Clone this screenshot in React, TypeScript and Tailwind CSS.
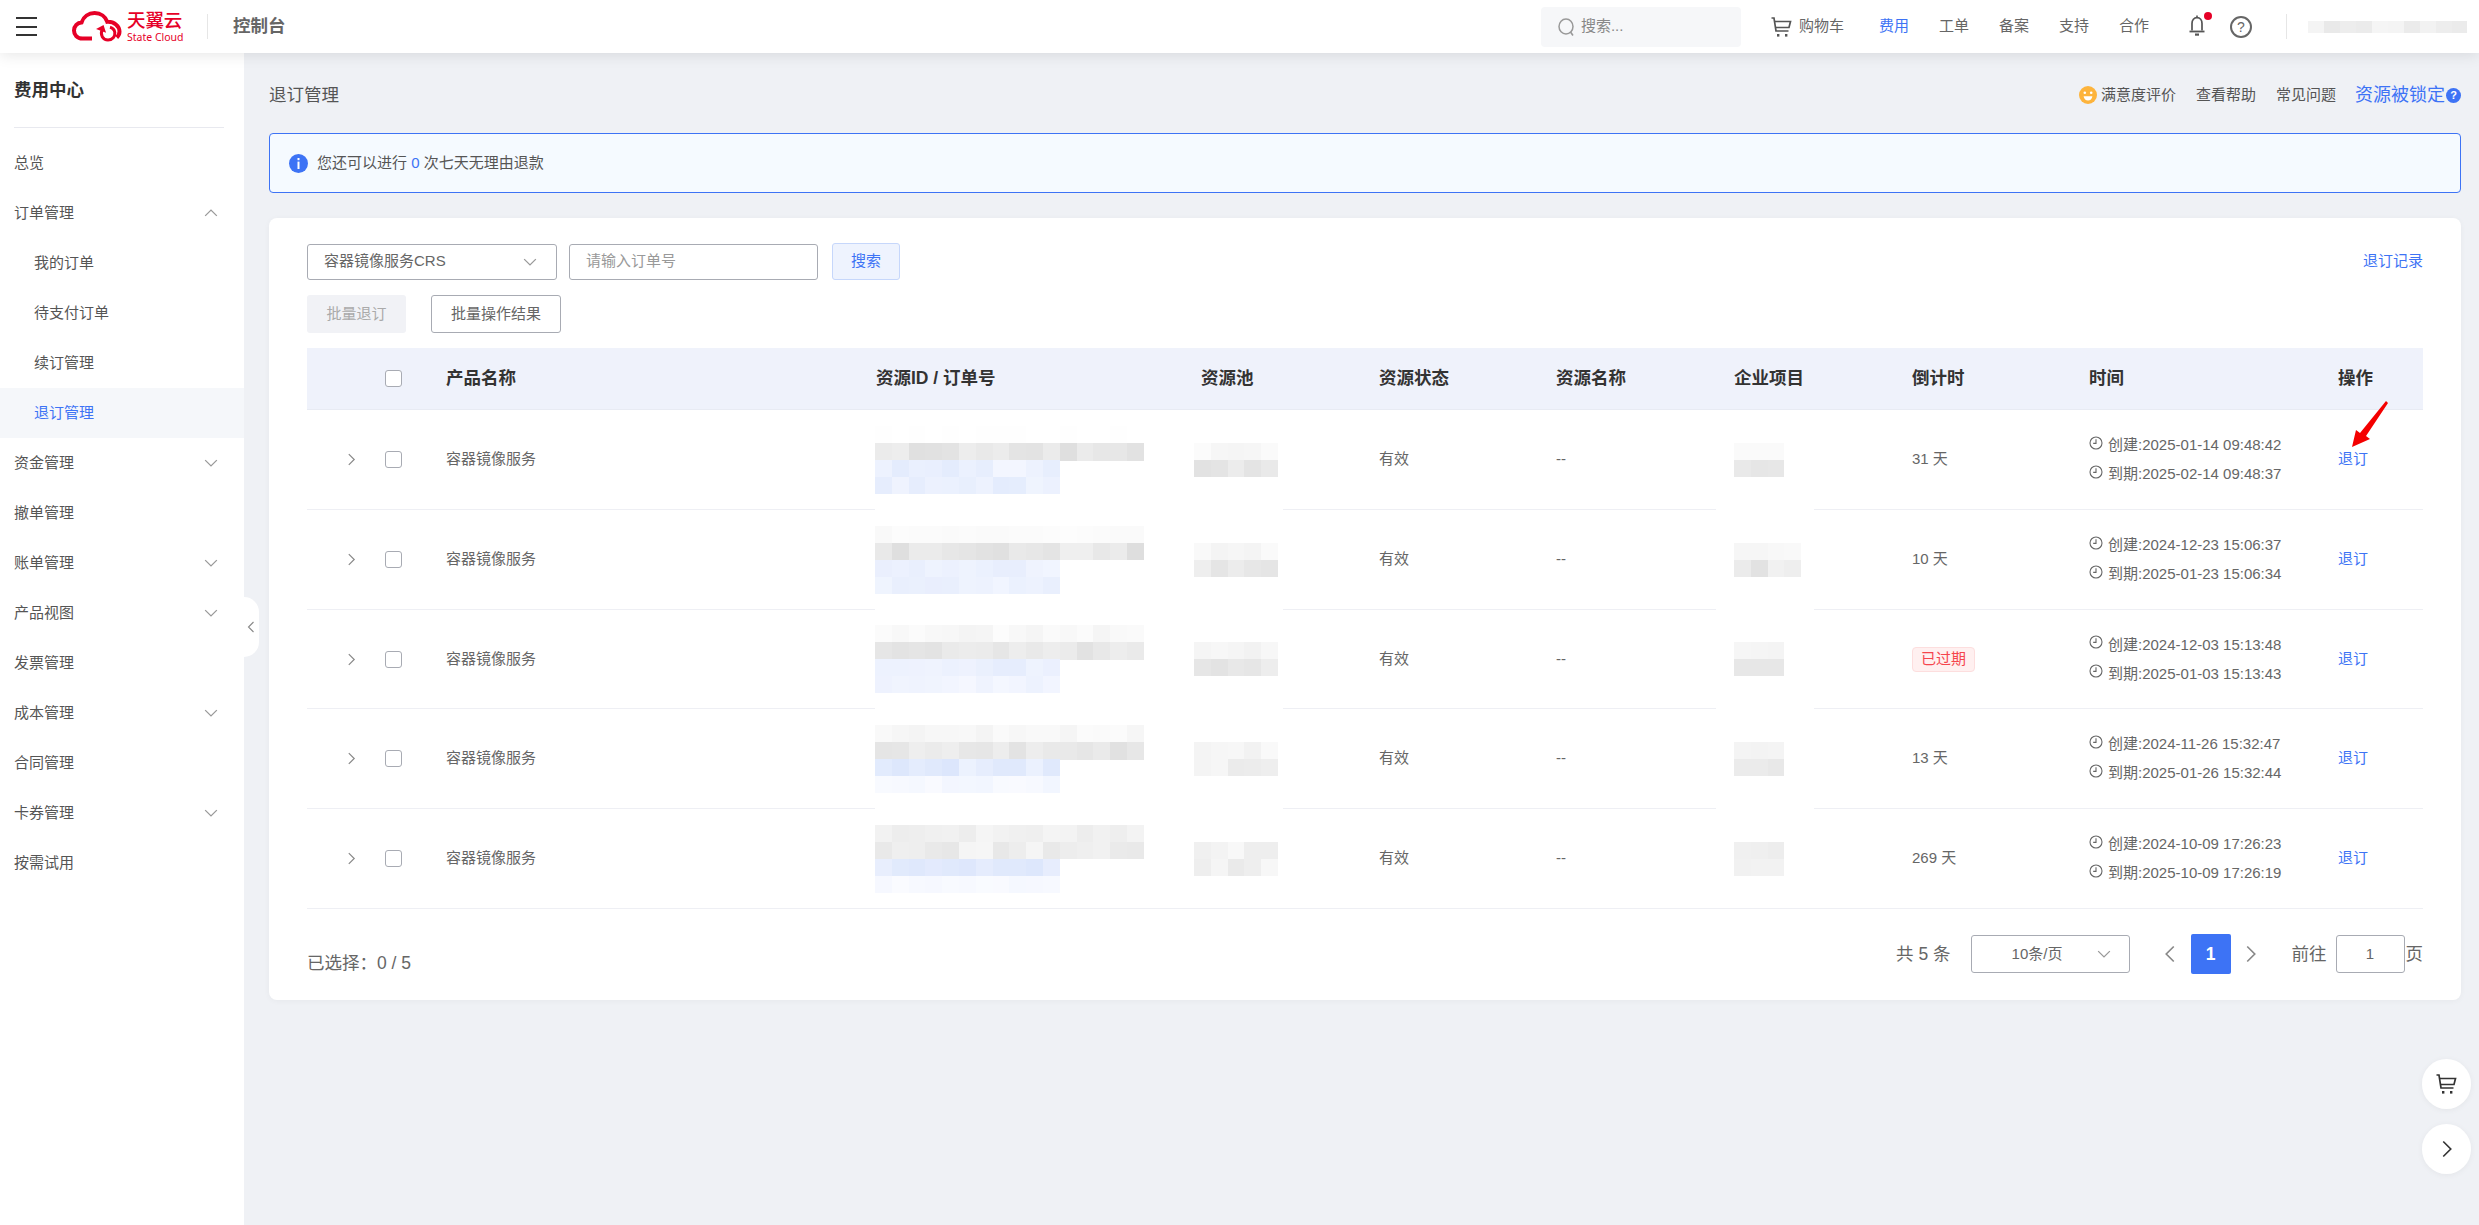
import React from "react";

type Band = { n: number; lo: [number, number, number]; hi: [number, number, number] };

function Mosaic({ bands, seed, cw = 16.8, ch = 17 }: { bands: Band[]; seed: number; cw?: number; ch?: number }) {
  let s = seed * 9301 + 49297;
  const rnd = () => {
    s = (s * 9301 + 49297) % 233280;
    return s / 233280;
  };
  const w = Math.max(...bands.map((b) => b.n)) * cw;
  const h = bands.length * ch;
  return (
    <svg width={w} height={h} viewBox={`0 0 ${w} ${h}`} shapeRendering="crispEdges" className="block shrink-0">
      {bands.map((b, r) =>
        Array.from({ length: b.n }).map((_, c) => {
          const t = rnd();
          const col = b.lo.map((v, i) => Math.round(v + (b.hi[i] - v) * t));
          return <rect key={`${r}-${c}`} x={c * cw} y={r * ch} width={cw + 0.5} height={ch + 0.5} fill={`rgb(${col[0]},${col[1]},${col[2]})`} />;
        })
      )}
    </svg>
  );
}

const g = (lo: number, hi: number, n: number): Band => ({ n, lo: [lo, lo, lo], hi: [hi, hi, hi] });
const b = (lo: [number, number, number], hi: [number, number, number], n = 11): Band => ({ n, lo, hi });

function Chevron({ dir = "down", className = "", size = 12, color = "#999" }: { dir?: "down" | "up" | "left" | "right"; className?: string; size?: number; color?: string }) {
  const d = { down: "M1 3.5 6 8.5 11 3.5", up: "M1 8.5 6 3.5 11 8.5", left: "M8.5 1 3.5 6 8.5 11", right: "M3.5 1 8.5 6 3.5 11" }[dir];
  return (
    <svg width={size} height={size} viewBox="0 0 12 12" fill="none" className={className}>
      <path d={d} stroke={color} strokeWidth="1.1" />
    </svg>
  );
}

function Cart({ color = "#555", w = 21, h = 20 }: { color?: string; w?: number; h?: number }) {
  return (
    <svg width={w} height={h} viewBox="0 0 21 20" fill="none">
      <path d="M0.5 1 H3 L5 14 H17.5" stroke={color} strokeWidth="1.7" />
      <path d="M3.6 4.5 H19.5 L18 10.5 H4.6" stroke={color} strokeWidth="1.7" />
      <rect x="6" y="17" width="2.4" height="2.6" fill={color} />
      <rect x="14" y="17" width="2.4" height="2.6" fill={color} />
    </svg>
  );
}

function Clock() {
  return (
    <svg width="14" height="14" viewBox="0 0 14 14" fill="none" className="shrink-0 -mt-[5px] mr-[5px]">
      <circle cx="7" cy="7" r="6" stroke="#666" strokeWidth="1.1" />
      <path d="M7 3.2 V7.4 H4.2" stroke="#666" strokeWidth="1.1" />
    </svg>
  );
}

function Logo() {
  return (
    <svg width="50" height="31" viewBox="0 0 50 31" fill="none" className="shrink-0">
      <path d="M20 27.5 H10.5 C5 27.5 2 23.6 2 19.5 C2 15 5.5 11.6 9.6 11.4 C11.5 5.6 16.6 2 22.6 2 C28.8 2 33.6 5.8 35.3 10.8 C42 10.4 47.5 15 47.5 20.6 C47.5 23 46.4 25 44.8 26.4" stroke="#e60027" strokeWidth="4" />
      <path d="M30.4 18.6 C27.6 23.6 31 29 36 29 C40.4 29 43.4 25.4 42.8 21.4 C42.4 18.8 40.4 16.8 38 16.2" stroke="#e60027" strokeWidth="3" />
      <path d="M24.8 20 L35.4 20 L30.4 13.6 Z" fill="#e60027" transform="rotate(20 30 17)" />
    </svg>
  );
}

const menu: { label: string; sub?: boolean; active?: boolean; chevron?: "up" | "down" }[] = [
  { label: "总览" },
  { label: "订单管理", chevron: "up" },
  { label: "我的订单", sub: true },
  { label: "待支付订单", sub: true },
  { label: "续订管理", sub: true },
  { label: "退订管理", sub: true, active: true },
  { label: "资金管理", chevron: "down" },
  { label: "撤单管理" },
  { label: "账单管理", chevron: "down" },
  { label: "产品视图", chevron: "down" },
  { label: "发票管理" },
  { label: "成本管理", chevron: "down" },
  { label: "合同管理" },
  { label: "卡券管理", chevron: "down" },
  { label: "按需试用" },
];

const cols = "grid grid-cols-[78px_61px_430px_325px_178px_177px_178px_178px_177px_249px_85px] items-center";

const blueA: [number, number, number] = [228, 236, 253];
const blueB: [number, number, number] = [244, 247, 255];

const rows = [
  {
    h: "h-[100px]",
    created: "2025-01-14 09:48:42",
    expire: "2025-02-14 09:48:37",
    left: "31 天",
    id: [g(254, 255, 16), g(221, 240, 16), b(blueA, blueB), b(blueA, [240, 244, 254])],
    pool: [g(244, 252, 5), g(222, 240, 5)],
    proj: [g(248, 254, 3), g(226, 236, 3)],
  },
  {
    h: "h-[100px]",
    created: "2024-12-23 15:06:37",
    expire: "2025-01-23 15:06:34",
    left: "10 天",
    id: [g(249, 253, 16), g(222, 240, 16), b([232, 238, 253], [242, 246, 255]), b([232, 238, 253], [242, 246, 255])],
    pool: [g(243, 251, 5), g(226, 243, 5)],
    proj: [g(246, 251, 4), g(226, 245, 4)],
  },
  {
    h: "h-[99px]",
    created: "2024-12-03 15:13:48",
    expire: "2025-01-03 15:13:43",
    left: "",
    id: [g(244, 252, 16), g(224, 238, 16), b([228, 236, 253], [240, 244, 254]), b([236, 241, 254], [246, 248, 255])],
    pool: [g(241, 248, 5), g(226, 240, 5)],
    proj: [g(241, 246, 3), g(228, 234, 3)],
  },
  {
    h: "h-[100px]",
    created: "2024-11-26 15:32:47",
    expire: "2025-01-26 15:32:44",
    left: "13 天",
    id: [g(244, 251, 16), g(224, 240, 16), b([220, 230, 252], [236, 242, 254]), b([242, 246, 255], [250, 251, 255])],
    pool: [g(241, 249, 5), g(232, 247, 5)],
    proj: [g(240, 245, 3), g(232, 238, 3)],
  },
  {
    h: "h-[100px]",
    created: "2024-10-09 17:26:23",
    expire: "2025-10-09 17:26:19",
    left: "269 天",
    id: [g(236, 246, 16), g(230, 246, 16), b([220, 230, 252], [232, 238, 253]), b([244, 247, 255], [251, 252, 255])],
    pool: [g(238, 248, 5), g(234, 248, 5)],
    proj: [g(236, 242, 3), g(238, 244, 3)],
  },
];

const headers = ["产品名称", "资源ID / 订单号", "资源池", "资源状态", "资源名称", "企业项目", "倒计时", "时间", "操作"];

export default function App() {
  return (
    <div className="h-screen flex flex-col overflow-hidden bg-[#eff1f5] text-[15px] text-[#666] [font-family:'Liberation_Sans','Noto_Sans_CJK_SC',sans-serif]">
      {/* Top bar */}
      <header className="relative z-20 h-[53px] shrink-0 bg-white flex items-center shadow-[0_2px_14px_rgba(0,0,0,0.1)]">
        <div className="ml-[16px] w-[21px] flex flex-col gap-[6.5px]">
          <span className="h-[2px] bg-[#333]" />
          <span className="h-[2px] bg-[#333]" />
          <span className="h-[2px] bg-[#333]" />
        </div>
        <div className="ml-[35px]">
          <Logo />
        </div>
        <div className="ml-[5px] w-[56px] flex flex-col items-start text-[#e60027]">
          <span className="text-[18.5px] leading-[20px] font-medium tracking-[-0.1px]">天翼云</span>
          <span className="text-[10.5px] leading-[10px] mt-[1px] whitespace-nowrap [font-family:'Noto_Sans',sans-serif]">State Cloud</span>
        </div>
        <span className="ml-[24px] w-px h-[25px] bg-[#e6e6e6]" />
        <span className="ml-[25px] text-[17.5px] font-bold text-[#666]">控制台</span>

        <div className="ml-auto w-[200px] h-[40px] rounded-[4px] bg-[#f6f7f9] flex items-center pl-[17px] text-[#888]">
          <svg width="17" height="20" viewBox="0 0 17 20" fill="none">
            <ellipse cx="8" cy="9.5" rx="7" ry="7.5" stroke="#999" strokeWidth="1.5" />
            <path d="M12.5 15 L15 18.5" stroke="#999" strokeWidth="1.6" />
          </svg>
          <span className="ml-[6px]">搜索...</span>
        </div>
        <div className="ml-[30px] flex items-center">
          <Cart color="#555" />
          <span className="ml-[7px]">购物车</span>
        </div>
        <div className="ml-[35px] flex items-center gap-[30px]">
          <span className="text-[#3d73f5]">费用</span>
          <span>工单</span>
          <span>备案</span>
          <span>支持</span>
          <span>合作</span>
        </div>
        <div className="relative ml-[37px] -mt-[2px]">
          <svg width="22" height="22" viewBox="0 0 22 22" fill="none" className="block">
            <path d="M6 15.5 V8.5 C6 5 8 2.6 11 2.6 C14 2.6 16 5 16 8.5 V15.5" stroke="#555" strokeWidth="1.7" />
            <path d="M3.5 16.5 H18.5" stroke="#555" strokeWidth="1.8" />
            <path d="M9 19.6 H13" stroke="#555" strokeWidth="2.2" />
            <path d="M11 0.4 V2.6" stroke="#555" strokeWidth="1.6" />
          </svg>
          <span className="absolute -top-[3px] -right-[4px] w-[8px] h-[8px] rounded-full bg-[#e60027]" />
        </div>
        <span className="ml-[22px] w-[22px] h-[22px] rounded-full border-[2px] border-[#666] flex items-center justify-center text-[14px] font-medium text-[#666] leading-none">?</span>
        <span className="ml-[34px] w-px h-[25px] bg-[#e6e6e6]" />
        <div className="ml-[21px] mr-[12px] w-[159px] h-[12px] overflow-hidden">
          <Mosaic bands={[g(232, 248, 10)]} seed={12} cw={16} ch={12} />
        </div>
      </header>

      <div className="flex-1 flex min-h-0">
        {/* Sidebar */}
        <aside className="relative z-10 w-[244px] shrink-0 bg-white">
          <div className="h-[75px] mx-[14px] w-[210px] border-b border-[#e8e9ef] flex items-center">
            <span className="text-[17.5px] font-bold text-[#333]">费用中心</span>
          </div>
          <nav className="mt-[10px]">
            {menu.map((m) => (
              <div key={m.label} className={`h-[50px] flex items-center pr-[26px] ${m.sub ? "pl-[34px]" : "pl-[14px]"} ${m.active ? "bg-[#f5f7fa] text-[#3d73f5]" : "text-[#555]"}`}>
                <span>{m.label}</span>
                {m.chevron && <Chevron dir={m.chevron} size={14} className="ml-auto" />}
              </div>
            ))}
          </nav>
          <div className="absolute left-full top-[544px] w-[15px] h-[60px] bg-white rounded-r-[15px] flex items-center justify-start pl-[1px]">
            <Chevron dir="left" size={12} color="#888" />
          </div>
        </aside>

        {/* Main */}
        <main className="relative flex-1 min-w-0 pl-[25px] pr-[18px]">
          <div className="h-[80px] pt-[4px] flex items-center">
            <span className="text-[17.5px] text-[#555]">退订管理</span>
            <div className="ml-auto flex items-center">
              <svg width="18" height="18" viewBox="0 0 18 18" className="mr-[4px]">
                <circle cx="9" cy="9" r="9" fill="#fdb43c" />
                <circle cx="5.8" cy="6.8" r="1.3" fill="#fff" />
                <circle cx="12.2" cy="6.8" r="1.3" fill="#fff" />
                <path d="M4.6 10.2 H13.4 C13 13 11.2 14.6 9 14.6 C6.8 14.6 5 13 4.6 10.2 Z" fill="#fff" />
              </svg>
              <span className="text-[#555]">满意度评价</span>
              <span className="ml-[20px] text-[#555]">查看帮助</span>
              <span className="ml-[20px] text-[#555]">常见问题</span>
              <span className="ml-[19px] text-[18px] text-[#3d73f5]">资源被锁定</span>
              <span className="ml-[1px] w-[15px] h-[15px] rounded-full bg-[#3d73f5] text-white text-[11px] font-bold flex items-center justify-center leading-none">?</span>
            </div>
          </div>

          <div className="h-[60px] rounded-[4px] border border-[#3d73f5] bg-[#f5faff] flex items-center pl-[19px]">
            <svg width="19" height="19" viewBox="0 0 19 19">
              <circle cx="9.5" cy="9.5" r="9.5" fill="#3d73f5" />
              <rect x="8.5" y="4" width="2" height="2.2" fill="#fff" />
              <rect x="8.5" y="7.6" width="2" height="7.4" fill="#fff" />
            </svg>
            <span className="ml-[9px] text-[#555]">
              您还可以进行 <span className="text-[#3d73f5]">0</span> 次七天无理由退款
            </span>
          </div>

          <section className="mt-[25px] h-[782px] rounded-[8px] bg-white pt-[25px] pl-[38px] pr-[38px] shadow-[0_1px_6px_rgba(0,0,0,0.04)]">
            <div className="flex items-center h-[37px]">
              <div className="w-[250px] h-[36px] rounded-[3px] border border-[#a8abb3] flex items-center pl-[16px] pr-[19px]">
                <span>容器镜像服务CRS</span>
                <Chevron dir="down" size={14} className="ml-auto" />
              </div>
              <div className="ml-[12px] w-[249px] h-[36px] rounded-[3px] border border-[#a8abb3] flex items-center pl-[16px]">
                <span className="text-[#999]">请输入订单号</span>
              </div>
              <button className="ml-[14px] w-[68px] h-[37px] rounded-[3px] border border-[#c6d7fb] bg-[#eef3fe] text-[#3d73f5]">搜索</button>
              <span className="ml-auto text-[#3d73f5]">退订记录</span>
            </div>
            <div className="mt-[15px] flex items-center">
              <button className="w-[99px] h-[38px] rounded-[3px] bg-[#f1f2f6] text-[#aaa]">批量退订</button>
              <button className="ml-[25px] w-[130px] h-[38px] rounded-[3px] border border-[#a8abb3] bg-white text-[#666]">批量操作结果</button>
            </div>

            <div className="relative mt-[15px]">
              <div className={`${cols} h-[62px] bg-[#eff2fb] border-b border-[#e8ebf3] text-[17.5px] font-bold text-[#333]`}>
                <span />
                <span className="w-[17px] h-[17px] rounded-[3px] border border-[#a8abb3] bg-white" />
                {headers.map((h) => (
                  <span key={h}>{h}</span>
                ))}
              </div>

              {rows.map((r, i) => (
                <div key={r.created} className={`${r.h} flex flex-col`}>
                  <div className={`${cols} flex-1 min-h-0`}>
                    <span className="pl-[38px]">
                      <Chevron dir="right" size={13} color="#888" />
                    </span>
                    <span className="w-[17px] h-[17px] rounded-[3px] border border-[#a8abb3]" />
                    <span>容器镜像服务</span>
                    <span className="-ml-[1px]">
                      <Mosaic bands={r.id} seed={i + 3} />
                    </span>
                    <span className="-ml-[7px]">
                      <Mosaic bands={r.pool} seed={i + 11} />
                    </span>
                    <span>有效</span>
                    <span>--</span>
                    <span>
                      <Mosaic bands={r.proj} seed={i + 21} />
                    </span>
                    {r.left ? (
                      <span>{r.left}</span>
                    ) : (
                      <span className="w-[63px] h-[25px] rounded-[4px] border border-[#fddede] bg-[#fff0f0] text-[#f5454d] flex items-center justify-center">已过期</span>
                    )}
                    <div className="flex flex-col gap-[9px] leading-[20px] whitespace-nowrap">
                      <span className="flex items-center">
                        <Clock />
                        创建:{r.created}
                      </span>
                      <span className="flex items-center">
                        <Clock />
                        到期:{r.expire}
                      </span>
                    </div>
                    <span className="text-[#3d73f5]">退订</span>
                  </div>
                  {i < rows.length - 1 ? (
                    <div className="h-px flex gap-0 shrink-0">
                      <span className="w-[568px] bg-[#eeeff4]" />
                      <span className="ml-[408px] w-[433px] bg-[#eeeff4]" />
                      <span className="ml-[98px] w-[609px] bg-[#eeeff4]" />
                    </div>
                  ) : (
                    <div className="h-px bg-[#eeeff4] shrink-0" />
                  )}
                </div>
              ))}

              <svg width="40" height="50" viewBox="0 0 40 50" className="absolute left-[2043px] top-[52px]">
                <path d="M36 1 L38 3 L16 36 L20 39 L2 47 L6 30 L10 33 Z" fill="#f40000" />
              </svg>
            </div>

            <div className="h-[91px] flex items-center text-[17.5px]">
              <span className="mt-[18px]">已选择：0 / 5</span>
              <div className="ml-auto flex items-center -mt-[1px]">
                <span>共 5 条</span>
                <div className="ml-[20px] relative w-[159px] h-[38px] rounded-[3px] border border-[#a8abb3] flex items-center justify-center pr-[26px] text-[15px]">
                  <span>10条/页</span>
                  <Chevron dir="down" size={14} className="absolute right-[18px]" />
                </div>
                <Chevron dir="left" size={18} color="#888" className="ml-[31px]" />
                <span className="ml-[12px] w-[40px] h-[40px] rounded-[2px] bg-[#3d73f5] text-white font-bold flex items-center justify-center">1</span>
                <Chevron dir="right" size={18} color="#888" className="ml-[11px]" />
                <span className="ml-[32px]">前往</span>
                <div className="ml-[9px] w-[69px] h-[38px] rounded-[3px] border border-[#a8abb3] flex items-center justify-center text-[15px]">1</div>
                <span className="ml-[1px]">页</span>
              </div>
            </div>
          </section>

          <div className="absolute top-[1006px] right-[8px] flex flex-col gap-[15px]">
            <span className="w-[49px] h-[50px] rounded-full bg-white flex items-center justify-center shadow-[0_1px_6px_rgba(0,0,0,0.05)]">
              <Cart color="#333" />
            </span>
            <span className="w-[49px] h-[50px] rounded-full bg-white flex items-center justify-center shadow-[0_1px_6px_rgba(0,0,0,0.05)]">
              <Chevron dir="right" size={18} color="#333" />
            </span>
          </div>
        </main>
      </div>
    </div>
  );
}
